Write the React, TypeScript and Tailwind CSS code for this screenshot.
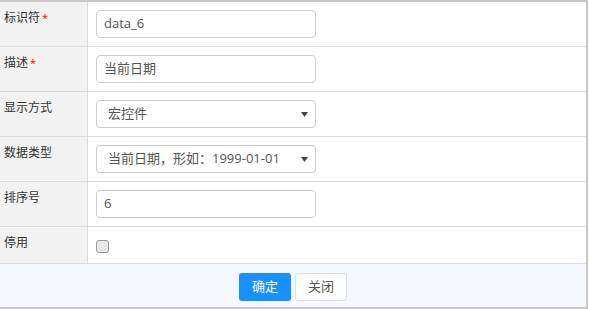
const font = { fontFamily: '"Open Sans", "Noto Sans CJK SC", sans-serif' };

function Label({ text, required }: { text: string; required?: boolean }) {
  return (
    <div className="border-r border-[#dcdcdc] bg-[#f2f2f2] px-1 pt-2 text-[12px] leading-4 text-[#333]">
      {text}
      {required && <span className="ml-0.5 align-top text-[11px] text-[#f00]">*</span>}
    </div>
  );
}

function TextBox({ value }: { value: string }) {
  return (
    <div className="flex h-[28px] w-[220px] items-center rounded-[4px] border border-[#ccc] bg-white px-[7px] text-[13px] text-[#555]">
      {value}
    </div>
  );
}

function SelectBox({ value }: { value: string }) {
  return (
    <div className="flex h-[28px] w-[220px] items-center justify-between rounded-[4px] border border-[#ccc] bg-white pl-[11px] pr-[7px] text-[13px] text-[#555]">
      <span>{value}</span>
      <svg width="7" height="5" viewBox="0 0 7 5">
        <path d="M0 0 H7 L3.5 5 Z" fill="#444" />
      </svg>
    </div>
  );
}

export default function App() {
  const rows = [
    { label: "标识符", required: true, field: <TextBox value="data_6" /> },
    { label: "描述", required: true, field: <TextBox value="当前日期" /> },
    { label: "显示方式", field: <SelectBox value="宏控件" /> },
    { label: "数据类型", field: <SelectBox value="当前日期，形如：1999-01-01" /> },
    { label: "排序号", field: <TextBox value="6" /> },
  ];

  return (
    <div className="h-[309px] w-[589px] bg-white" style={font}>
      <div className="w-[588px] border-t-2 border-r-2 border-b-2 border-[#c8c8c8]">
        {rows.map((r) => (
          <div key={r.label} className="grid h-[45px] grid-cols-[88px_1fr] border-b border-[#dcdcdc]">
            <Label text={r.label} required={r.required} />
            <div className="pl-2 pt-2">{r.field}</div>
          </div>
        ))}
        <div className="grid h-[37px] grid-cols-[88px_1fr] border-b border-[#dcdcdc]">
          <Label text="停用" />
          <div className="pl-2 pt-[13px]">
            <span className="block h-[13px] w-[13px] rounded-[3px] border border-[#999] bg-[#e8e8e8]" />
          </div>
        </div>
        <div className="flex h-[43px] items-center justify-center gap-1 bg-[#f5f9ff] pt-[2px]">
          <button className="h-[28px] w-[52px] rounded-[3px] bg-[#1890ff] text-[13px] text-white">确定</button>
          <button className="h-[28px] w-[52px] rounded-[3px] border border-[#ddd] bg-white text-[13px] text-[#555]">关闭</button>
        </div>
      </div>
    </div>
  );
}
